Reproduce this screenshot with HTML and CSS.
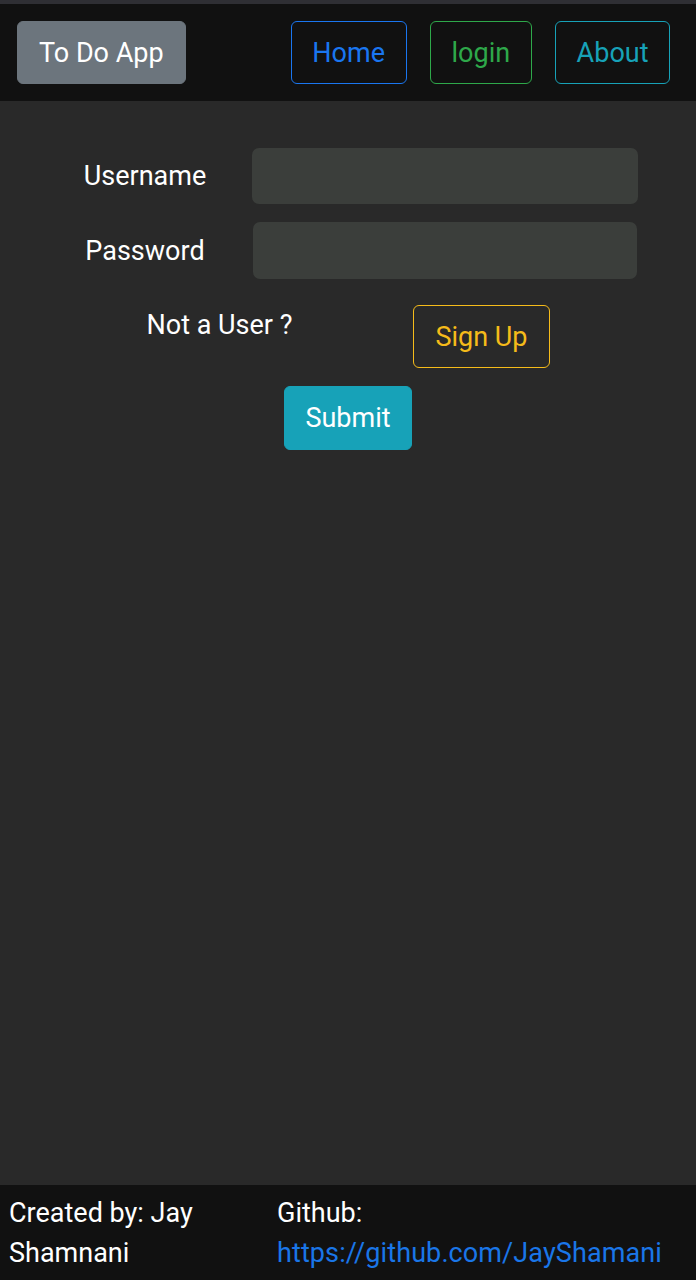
FILE: index.html
```html
<!DOCTYPE html>
<html lang="en">
<head>
<meta charset="utf-8">
<title>To Do App</title>
<link rel="stylesheet" href="styles.css">
</head>
<body>
<div class="page">
  <div class="topstrip"></div>
  <header class="navbar">
    <a class="btn btn-brand" href="#">To Do App</a>
    <nav class="nav">
      <a class="btn btn-outline blue" href="#">Home</a>
      <a class="btn btn-outline green" href="#">login</a>
      <a class="btn btn-outline cyan" href="#">About</a>
    </nav>
  </header>
  <main class="main">
    <form class="form">
      <div class="field">
        <label class="label" for="u">Username</label>
        <input class="input" id="u" type="text">
      </div>
      <div class="field">
        <label class="label" for="p">Password</label>
        <input class="input input-pw" id="p" type="password">
      </div>
      <div class="signup-row">
        <span class="note">Not a User ?</span>
        <div class="signup-cell"><a class="btn btn-outline yellow" href="#">Sign Up</a></div>
      </div>
      <div class="submit-row">
        <button class="btn btn-submit" type="button">Submit</button>
      </div>
    </form>
  </main>
  <footer class="footer">
    <div class="fcol fcol-left">Created by: Jay Shamnani</div>
    <div class="fcol">Github:<br><a class="flink" href="#">https://github.com/JayShamani</a></div>
  </footer>
</div>
</body>
</html>
```
FILE: styles.css
```css
* { box-sizing: border-box; }
html, body { margin: 0; padding: 0; }
body {
  font-family: Roboto, "Noto Sans", sans-serif;
  background: #292929;
  color: #fff;
  font-size: 27px;
  line-height: 40px;
}
.page {
  min-height: 100vh;
  display: flex;
  flex-direction: column;
}
.topstrip { height: 4px; background: #2f2f34; }
.navbar {
  background: #111111;
  display: flex;
  justify-content: space-between;
  align-items: center;
  padding: 17px 26px 17px 17px;
}
.nav { display: flex; gap: 23px; }
.btn {
  display: inline-block;
  font-family: inherit;
  font-size: 27px;
  line-height: 40px;
  padding: 10.5px 20.5px;
  border: 1px solid transparent;
  border-radius: 6px;
  text-decoration: none;
  background: transparent;
  color: #fff;
}
.btn-brand { background: #6c757d; border-color: #6c757d; padding-left: 21px; padding-right: 21px; }
.btn-outline.blue { color: #1a76f0; border-color: #1a76f0; }
.btn-outline.green { color: #2ea84a; border-color: #2ea84a; padding-left: 21px; padding-right: 21px; }
.btn-outline.cyan { color: #17a2b8; border-color: #17a2b8; }
.btn-outline.yellow { color: #f5bb1a; border-color: #f5bb1a; padding-left: 21px; padding-right: 21px; }
.btn-submit { background: #17a2b8; border-color: #17a2b8; color: #fff; padding: 11px 20.5px; }
.main { flex: 1; }
.form {
  padding-top: 47px;
  display: flex;
  flex-direction: column;
}
.field {
  display: grid;
  grid-template-columns: 192px 386px;
  margin-left: 49px;
  column-gap: 11px;
  align-items: center;
  margin-bottom: 18px;
}
.label { text-align: center; color: #fff; }
.input {
  height: 56px;
  border: none;
  border-radius: 7px;
  background: #3b3e3b;
  color: #fff;
  font-size: 24px;
  padding: 0 14px;
}
.input-pw { width: 384px; margin-left: 1px; height: 57px; }
.signup-row {
  display: grid;
  grid-template-columns: 257px 267px;
  margin-left: 91px;
  margin-top: 8px;
  align-items: start;
}
.note { text-align: center; }
.signup-cell { text-align: center; }
.submit-row {
  margin-top: 18px;
  display: flex;
  justify-content: center;
}
.footer {
  background: #111111;
  display: grid;
  grid-template-columns: 268px 1fr;
  padding: 8px 9px 0 9px;
  line-height: 40px;
  height: 95px;
}
.fcol-left { padding-right: 40px; }
.flink { color: #1a76e8; text-decoration: none; letter-spacing: 0.1px; }
```
